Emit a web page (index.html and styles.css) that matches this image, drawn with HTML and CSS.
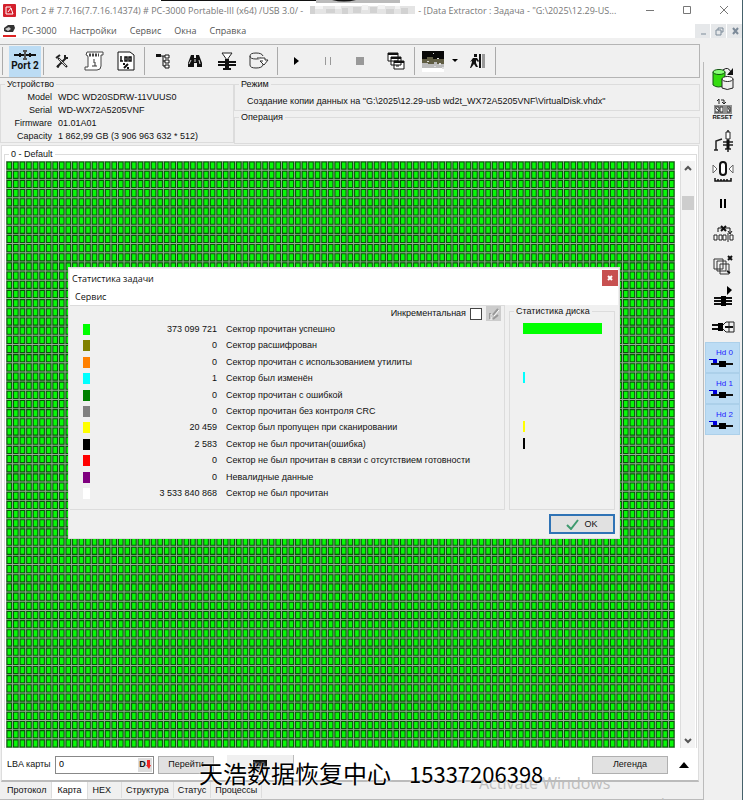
FILE: index.html
```html
<!DOCTYPE html>
<html lang="ru">
<head>
    <meta charset="UTF-8">
    <meta name="viewport" content="width=device-width, initial-scale=1.0">
    <title>PC-3000 Data Extractor</title>
    <link rel="stylesheet" href="styles.css">
</head>
<body>
    <svg class="top-strip" viewBox="0 0 240 4" width="240" height="4" aria-hidden="true">
        <path d="M0 0h156v1H0z" fill="#111"/>
        <path d="M155 0h84v3h-84z" fill="#bbb"/>
        <path d="M171 0h24q-12 3-24 0z" fill="#111"/>
    </svg>

    <header class="title-bar">
        <svg class="app-icon" viewBox="0 0 13 13" width="13" height="13">
            <rect width="13" height="13" rx="1" fill="#d4202c"/>
            <path d="M3 10V3h5M3 10h7M5 8l3-4 2 6" stroke="#fff" fill="none"/>
        </svg>
        <span>Port 2 # 7.7.16(7.7.16.14374) # PC-3000 Portable-III (x64) /USB 3.0/ -</span>
        <svg class="mosaic" viewBox="0 0 105 11" preserveAspectRatio="none" aria-hidden="true">
            <path fill="#e4e4e4" d="M0 1h105v8H0z"/>
            <path fill="#d2d2d2" d="M0 1h5v8H0zM16 4h9v4h-9zM32 3h6v6h-6zM43 2h8v6h-8zM60 2h7v6h-7zM76 4h8v5h-8zM91 3h7v6h-7z"/>
            <path fill="#f3f3f3" d="M5 1h8v3H5zM25 1h6v3h-6zM52 0h6v5h-6zM68 0h7v4h-7zM85 1h5v3h-5z"/>
        </svg>
        <span class="doc-title">- [Data Extractor : Задача - "G:\2025\12.29-US...</span>
        <div class="window-buttons">
            <button aria-label="Свернуть"><svg viewBox="0 0 10 10" width="10" height="10"><path d="M1 5.500h8"/></svg></button>
            <button aria-label="Развернуть"><svg viewBox="0 0 10 10" width="10" height="10"><path d="M1.500 1.500h7v7h-7z"/></svg></button>
            <button aria-label="Закрыть"><svg viewBox="0 0 10 10" width="10" height="10"><path d="M1 1l8 8M9 1l-8 8"/></svg></button>
        </div>
    </header>

    <nav class="menu-bar">
        <svg class="app-icon" viewBox="0 0 13 13" width="13" height="13">
            <path d="M1 4l4-3h6l1 3-2 4H3L1 7z" fill="#333"/>
            <path d="M2 5l4-2 2 2-3 2z" fill="#ccc"/>
            <path d="M0 11h13v2H0z" fill="#d22"/>
        </svg>
        <a href="#">PC-3000</a>
        <a href="#">Настройки</a>
        <a href="#">Сервис</a>
        <a href="#">Окна</a>
        <a href="#">Справка</a>
        <div class="mdi-buttons">
            <button aria-label="Свернуть окно"><svg viewBox="0 0 10 10" width="10" height="10"><path d="M3 8h5"/></svg></button>
            <button aria-label="Восстановить окно"><svg viewBox="0 0 10 10" width="10" height="10"><path d="M4 4V2h5v4H7M2 4h5v5H2z"/></svg></button>
            <button aria-label="Закрыть окно"><svg viewBox="0 0 10 10" width="10" height="10"><path d="M3 2l5 6M8 2l-5 6" stroke-width="2"/></svg></button>
        </div>
    </nav>

    <div class="workspace">
        <main class="main">
            <div class="toolbar">
                <span class="separator"></span>
                <button class="port active">
                    <svg viewBox="0 0 24 10" width="24" height="10"><path d="M1 5h22M7 3v4M17 3v4" stroke="#111" stroke-width="2"/><path d="M10 1h4M10 9h4M12 1v8" stroke="#555" stroke-width="2"/></svg>
                    Port 2
                </button>
                <span class="separator"></span>
                <button aria-label="Настройки"><svg viewBox="0 0 16 16" width="16" height="16"><path d="M4 5l9 9M12 5l-9 9" stroke="#222" stroke-width="2"/><path d="M2 5l4-3M11 2v3h3M3 13l2 1" stroke="#222" stroke-width="2" fill="none"/><path d="M5 6l7 7" stroke="#ddd"/></svg></button>
                <button aria-label="Информация"><svg viewBox="0 0 20 20" width="20" height="20"><path d="M3 1h16v3h-2v11q0 4-4 4H1v-3h3V6Q4 4 2 4z" fill="#fff" stroke="#444"/><path d="M5 4h10" stroke="#444" stroke-width="3" stroke-dasharray="2 1"/><path d="M10 8v2M9 11h2v4M8 15h5" stroke="#333" fill="none"/></svg></button>
                <button aria-label="Проценты"><svg viewBox="0 0 18 20" width="18" height="20"><path d="M1 1h12l4 3v15H1z" fill="#fff" stroke="#111"/><path d="M4 5v5M3 10h3M8 6h2v4H8zM12 6h2v4h-2z" stroke="#111" fill="none" stroke-width="1.500"/><path d="M6 13h2M7 17l4-4M10 17h2" stroke="#111" stroke-width="2"/></svg></button>
                <span class="separator"></span>
                <button aria-label="Структура"><svg viewBox="0 0 16 16" width="16" height="16"><path d="M1 1h5v3H1z" fill="#111"/><path d="M6 3h2v10h3M8 8h3M8 3h3" fill="none" stroke="#111"/><path d="M10 2h4v3h-4zM10 7h4v3h-4zM10 12h4v3h-4z" fill="#fff" stroke="#111"/></svg></button>
                <button aria-label="Поиск"><svg viewBox="0 0 16 16" width="16" height="16"><path d="M4 2h3v3h2V2h3l3 8v4h-5v-4H7v4H1v-4z" fill="#111"/><path d="M4 7l-2 4M12 7l1 4M8 6v3" stroke="#ddd"/></svg></button>
                <button aria-label="Чтение"><svg viewBox="0 0 20 18" width="20" height="18"><path d="M5 1h10l-5 7z" fill="#fff" stroke="#222"/><path d="M10 7v9" stroke="#111" stroke-width="4"/><path d="M1 10h18M1 13h18" stroke="#111" stroke-width="2"/><path d="M6 17h8" stroke="#111" stroke-width="2"/></svg></button>
                <button aria-label="Диск"><svg viewBox="0 0 20 18" width="20" height="18"><path d="M1 4v9q0 3 6 3t7-3v-3M1 4q0-3 6-3t7 3M1 4q0 3 6 3 4 0 5-1" fill="none" stroke="#333"/><path d="M8 6h8v2h3l-4 5-4-4h3" fill="#fff" stroke="#333"/></svg></button>
                <span class="separator"></span>
                <button aria-label="Старт"><svg viewBox="0 0 10 10" width="10" height="10"><path d="M3 1l5 4-5 4z"/></svg></button>
                <button aria-label="Пауза"><svg viewBox="0 0 10 10" width="10" height="10"><path d="M2 1h1v8H2zM7 1h1v8H7z" fill="#999"/></svg></button>
                <button aria-label="Стоп"><svg viewBox="0 0 10 10" width="10" height="10"><path d="M1 1h8v8H1z" fill="#999"/></svg></button>
                <span class="gap"></span>
                <button aria-label="Окна"><svg viewBox="0 0 18 18" width="18" height="18"><path d="M1 1h10v8H1zM4 5h10v8H4zM7 9h10v8H7z" fill="#fff" stroke="#111"/><path d="M1 2h10M4 6h10M7 10h10" stroke="#111" stroke-width="2"/><path d="M9 14h3" stroke="#111"/></svg></button>
                <span class="separator"></span>
                <button aria-label="Карта"><svg viewBox="0 0 22 21" width="22" height="21"><path d="M0 0h22v8H0z" fill="#080808"/><path d="M0 8h5V6h6v2h11v6H0z" fill="#605d43"/><path d="M0 12h6v1h6v-2h3v2h7v4H0z" fill="#bbb"/><path d="M0 17h22v4H0z" fill="#fff"/><path d="M11 2h1v1h-1zM15 7h2v1h-2zM5 10h2v1H5zM17 12h2v2h-2zM12 15h2v1h-2zM20 16h2v2h-2z" fill="#ddd"/></svg></button>
                <button class="arrow" aria-label="Выбор карты"><svg viewBox="0 0 7 4" width="7" height="4"><path d="M0 0h6L3 3z"/></svg></button>
                <button aria-label="Выход"><svg viewBox="0 0 16 16" width="16" height="16"><path d="M5 1h3v3H5zM4 5h4l2 3-1 1-2-2v3l2 4H7l-2-3-3 4H1l2-6V8L1 9z" fill="#111"/><path d="M10 1h2v14h-2z" fill="#111"/><path d="M13 1h3v14h-3z" fill="#999"/></svg></button>
                <span class="separator"></span>
            </div>

            <section class="info">
                <fieldset class="device">
                    <legend>Устройство</legend>
                    <dl>
                        <dt>Model</dt><dd>WDC WD20SDRW-11VUUS0</dd>
                        <dt>Serial</dt><dd>WD-WX72A5205VNF</dd>
                        <dt>Firmware</dt><dd>01.01A01</dd>
                        <dt>Capacity</dt><dd>1 862,99 GB (3 906 963 632 * 512)</dd>
                    </dl>
                </fieldset>
                <div class="state">
                    <fieldset>
                        <legend>Режим</legend>
                        <p>Создание копии данных на "G:\2025\12.29-usb wd2t_WX72A5205VNF\VirtualDisk.vhdx"</p>
                    </fieldset>
                    <fieldset>
                        <legend>Операция</legend>
                    </fieldset>
                </div>
            </section>

            <section class="map-panel">
                <fieldset class="map-group">
                    <legend>0 - Default</legend>
                    <div class="map-area">
                        <!-- 102 x 64 sectors, drawn as dashed strokes across a green field -->
                        <svg class="map" viewBox="0 0 1020 640" preserveAspectRatio="none">
                            <rect width="1020" height="640" fill="#08f808"/>
                            <path class="line-dark" d="M0 320h1020" stroke-width="640" stroke-dasharray="4.600 5.400" stroke-dashoffset="2.300"/>
                            <path class="line-dark" d="M510 0v640" stroke-width="1020" stroke-dasharray="3.400 6.600" stroke-dashoffset="1.700"/>
                            <path class="line-light" d="M0 320h1020" stroke-width="640" stroke-dasharray="1.400 8.600" stroke-dashoffset="0.700"/>
                            <path class="line-light" d="M510 0v640" stroke-width="1020" stroke-dasharray="1 9" stroke-dashoffset="0.500"/>
                        </svg>
                        <div class="scrollbar">
                            <button aria-label="Вверх"><svg viewBox="0 0 8 6" width="8" height="6"><path d="M1 5l3-3 3 3"/></svg></button>
                            <span class="thumb"></span>
                            <button aria-label="Вниз"><svg viewBox="0 0 8 6" width="8" height="6"><path d="M1 1l3 3 3-3"/></svg></button>
                        </div>
                    </div>
                </fieldset>
                <div class="map-controls">
                    <label for="lba">LBA карты</label>
                    <div class="lba-box">
                        <input id="lba" type="text" value="0">
                        <button aria-label="Формат"><b>D</b><svg viewBox="0 0 5 9" width="5" height="9"><path d="M1 0h3v5h1L3 9 0 5h1z" fill="#e22"/></svg></button>
                    </div>
                    <button class="push go">Перейти</button>
                    <div class="mini"><svg viewBox="0 0 14 10" width="14" height="10"><path d="M0 0h14v6H0z" fill="#111"/><path d="M0 6h14v4H0z" fill="#777"/></svg></div>
                    <button class="push legend-btn">Легенда</button>
                    <button class="expand" aria-label="Развернуть"><svg viewBox="0 0 10 6" width="10" height="6"><path d="M5 0l5 6H0z"/></svg></button>
                </div>
            </section>

            <div class="tabs">
                <button>Протокол</button>
                <button class="current">Карта</button>
                <button class="hex">HEX</button>
                <button>Структура</button>
                <button>Статус</button>
                <button>Процессы</button>
            </div>
        </main>

        <aside class="side-bar">
            <button aria-label="Копия диска"><svg viewBox="0 0 24 24" width="24" height="24"><path d="M2 5v13q5 4 12 0V5" fill="#35dd10" stroke="#151"/><ellipse cx="8" cy="5" rx="6" ry="2.500" fill="#8f7" stroke="#151"/><path d="M11 12v9q5 3 11 0v-9" fill="#eee" stroke="#222"/><ellipse cx="16.500" cy="12" rx="5.500" ry="2.500" fill="#fff" stroke="#222"/><path d="M12 3q5-4 8 2" fill="none" stroke="#111"/><path d="M22 1v7h-6z" fill="#111"/></svg></button>
            <button aria-label="Reset" class="reset"><svg viewBox="0 0 20 16" width="20" height="16"><path d="M4 3l2-2v5M8 2h3v4M9 4l2 2 2-2" fill="none" stroke="#222"/><path d="M1 8h18M1 15h18" stroke="#333"/><path d="M2 9v5h4V9zM7 9v5h3V9zM14 9v5h3V9zM12 9v5M18 9v5M3 10l3 3M15 10l2 3" stroke="#333" fill="none"/></svg><span>RESET</span></button>
            <button aria-label="Питание"><svg viewBox="0 0 22 22" width="22" height="22"><path d="M2 20h4M4 20v-9l6-2M11 12h10M11 15h10M16 0v22M13 19h6" fill="none" stroke="#222" stroke-width="1.500"/><path d="M14 2h4v7h-4z" fill="#fff" stroke="#222"/><path d="M16 10v9" stroke="#111" stroke-width="3"/></svg></button>
            <button aria-label="Рекалибровка"><svg viewBox="0 0 22 22" width="22" height="22"><rect x="8" y="1" width="6" height="13" rx="3" fill="#fff" stroke="#111" stroke-width="2"/><path d="M1 4l4 4-4 4zM21 4l-4 4 4 4z" fill="#fff" stroke="#666"/><path d="M3 17v3h16v-3M6 18v2M9 18v2M12 18v2M15 18v2" fill="none" stroke="#111" stroke-width="1.500"/></svg></button>
            <button aria-label="Пауза"><svg viewBox="0 0 10 10" width="10" height="10"><path d="M2 1h2v9H2zM6 1h2v9H6z"/></svg></button>
            <button aria-label="Пропуск"><svg viewBox="0 0 22 18" width="22" height="18"><path d="M6 7V3h12v5M16 6l2 3 2-3" fill="none" stroke="#111"/><path d="M9 1l5 5M14 1l-5 5" stroke="#111" stroke-width="2"/><path d="M2 10h3v5H2zM7 10h3v5H7zM11 10h3v5h-3zM16 8v9M18 10h3v5h-3z" fill="#fff" stroke="#222"/></svg></button>
            <button aria-label="Копировать"><svg viewBox="0 0 22 20" width="22" height="20"><path d="M2 4h9v10H2zM5 6h9v10H5zM8 9h9v10H8z" fill="#f0f0f0" stroke="#333"/><path d="M16 1l4 4M20 1l-4 4M15 16l3 2" stroke="#111" stroke-width="2"/></svg></button>
            <button aria-label="Запуск головок"><svg viewBox="0 0 20 22" width="20" height="22"><path d="M14 1l5 4-5 5z"/><path d="M1 13h18M1 16h18M1 19h18" stroke="#111" stroke-width="2"/><path d="M8 11h5v10H8z"/></svg></button>
            <button aria-label="Головки"><svg viewBox="0 0 24 14" width="24" height="14"><path d="M1 5h11M1 9h11M14 7h8" stroke="#111" stroke-width="2"/><path d="M7 3h5v8H7z"/><path d="M12 5l3-3h8v10h-8l-3-3M18 2v10" fill="none" stroke="#222"/></svg></button>
            <button class="head active">Hd 0<svg viewBox="0 0 24 10" width="24" height="10"><path d="M2 6h22" stroke="#111" stroke-width="2"/><path d="M10 3h7v6h-7z"/><path d="M0 1h8v4H4V2H0z" fill="#00d"/></svg></button>
            <button class="head active">Hd 1<svg viewBox="0 0 24 10" width="24" height="10"><path d="M2 6h22" stroke="#111" stroke-width="2"/><path d="M10 3h7v6h-7z"/><path d="M0 1h8v4H4V2H0z" fill="#00d"/></svg></button>
            <button class="head active">Hd 2<svg viewBox="0 0 24 10" width="24" height="10"><path d="M2 6h22" stroke="#111" stroke-width="2"/><path d="M10 3h7v6h-7z"/><path d="M0 1h8v4H4V2H0z" fill="#00d"/></svg></button>
        </aside>
    </div>

    <section class="dialog" role="dialog" aria-labelledby="dialog-title">
        <header class="dialog-title">
            <span id="dialog-title">Статистика задачи</span>
            <button aria-label="Закрыть"><svg viewBox="0 0 6 6" width="6" height="6"><path d="M1 1l4 4M5 1l-4 4"/></svg></button>
        </header>
        <nav class="dialog-menu"><a href="#">Сервис</a></nav>
        <div class="dialog-body">
            <div class="stats">
                <div class="incremental">
                    <label for="inc">Инкрементальная</label>
                    <input id="inc" type="checkbox">
                    <button aria-label="Очистить"><svg viewBox="0 0 14 14" width="14" height="14"><path d="M3 6v6M6 8l5-6M6 12l5-4M2 9h3" stroke="#999" stroke-width="2"/><path d="M4 7v6M7 9l5-6" stroke="#fff"/></svg></button>
                </div>
                <table>
                    <tr><td><i class="swatch read"></i></td><td>373 099 721</td><td>Сектор прочитан успешно</td></tr>
                    <tr><td><i class="swatch decoded"></i></td><td>0</td><td>Сектор расшифрован</td></tr>
                    <tr><td><i class="swatch utility"></i></td><td>0</td><td>Сектор прочитан с использованием утилиты</td></tr>
                    <tr><td><i class="swatch changed"></i></td><td>1</td><td>Сектор был изменён</td></tr>
                    <tr><td><i class="swatch with-error"></i></td><td>0</td><td>Сектор прочитан с ошибкой</td></tr>
                    <tr><td><i class="swatch no-crc"></i></td><td>0</td><td>Сектор прочитан без контроля CRC</td></tr>
                    <tr><td><i class="swatch skipped"></i></td><td>20 459</td><td>Сектор был пропущен при сканировании</td></tr>
                    <tr><td><i class="swatch failed"></i></td><td>2 583</td><td>Сектор не был прочитан(ошибка)</td></tr>
                    <tr><td><i class="swatch not-ready"></i></td><td>0</td><td>Сектор не был прочитан в связи с отсутствием готовности</td></tr>
                    <tr><td><i class="swatch invalid"></i></td><td>0</td><td>Невалидные данные</td></tr>
                    <tr><td><i class="swatch unread"></i></td><td>3 533 840 868</td><td>Сектор не был прочитан</td></tr>
                </table>
            </div>
            <fieldset class="disk-stats">
                <legend>Статистика диска</legend>
                <div class="bars">
                    <span class="bar read" style="width: 100%"></span>
                    <span></span>
                    <span></span>
                    <span class="bar changed" style="width: 2%"></span>
                    <span></span>
                    <span></span>
                    <span class="bar skipped" style="width: 2%"></span>
                    <span class="bar failed" style="width: 2%"></span>
                    <span></span>
                    <span></span>
                    <span></span>
                </div>
            </fieldset>
        </div>
        <footer class="dialog-footer">
            <button class="ok"><svg viewBox="0 0 13 11" width="13" height="11"><path d="M1 6l4 4 7-9"/></svg>OK</button>
        </footer>
    </section>

    <div class="activation">
        <strong>Activate Windows</strong>
        <span>Go to Settings to activate Windows.</span>
    </div>
    <div class="watermark"><span>天浩数据恢复中心</span> <span class="phone">15337206398</span></div>
</body>
</html>
```

FILE: styles.css
```css
* {
    box-sizing: border-box;
}

body {
    position: relative;
    display: flex;
    flex-direction: column;
    height: 100vh;
    margin: 0;
    overflow: hidden;
    border-right: 1px solid #45616b;
    background: #fff;
    color: #111;
    font-family: "Liberation Sans", Arial, sans-serif;
    font-size: 9px;
    line-height: 13px;
}

button {
    display: flex;
    align-items: center;
    justify-content: center;
    margin: 0;
    padding: 0;
    border: none;
    background: none;
    color: inherit;
    font: inherit;
}

a {
    color: inherit;
    text-decoration: none;
}

svg {
    display: block;
    flex: none;
}

fieldset {
    min-width: 0;
    margin: 0;
    padding: 0;
    border: 1px solid #dcdcdc;
}

legend {
    margin-left: 4px;
    padding: 0 2px;
}

/* Title and menu */
.top-strip {
    position: absolute;
    top: 0;
    left: 161px;
}

.title-bar,
.menu-bar {
    display: flex;
    align-items: center;
    height: 20px;
    padding-left: 3px;
    color: #777;
    font-family: "Open Sans", "Noto Sans", sans-serif;
    white-space: nowrap;
}

.title-bar .app-icon {
    margin-right: 5px;
}

.mosaic {
    flex: 0 1 105px;
    width: 105px;
    height: 11px;
    margin: 0 3px 0 7px;
}

.window-buttons,
.mdi-buttons {
    display: flex;
    margin-left: auto;
}

.window-buttons button {
    width: 37px;
    height: 20px;
}

.window-buttons path {
    fill: none;
    stroke: #777;
}

.menu-bar {
    gap: 13px;
    height: 18px;
    color: #555;
    padding-top: 3px;
}

.menu-bar .app-icon {
    margin-right: -7px;
}

.mdi-buttons {
    gap: 1px;
}

.mdi-buttons button {
    width: 15px;
    height: 14px;
    background: #e6e8ea;
}

.mdi-buttons path {
    fill: none;
    stroke: #7d8b99;
}

.workspace {
    display: flex;
    flex: 1;
    min-height: 0;
    background: #f0f0f0;
}

.main {
    display: flex;
    flex: 1;
    flex-direction: column;
    min-width: 0;
    padding-top: 6px;
}

/* Toolbar */
.toolbar {
    display: flex;
    align-items: center;
    height: 34px;
    margin-right: 3px;
    border: 1px solid #b4b4b4;
    border-left: none;
}

.toolbar button {
    width: 32px;
    height: 31px;
}

.toolbar .separator {
    width: 1px;
    height: 28px;
    margin: 0 2px;
    background: #aaa;
}

.toolbar .separator:first-child {
    margin-right: 6px;
}

.toolbar .gap {
    width: 4px;
}

.toolbar .arrow {
    width: 12px;
}

.toolbar .port {
    flex-direction: column;
    color: #111;
    font-family: Roboto, sans-serif;
    font-size: 10px;
    font-weight: bold;
    line-height: 12px;
    white-space: nowrap;
}

.active {
    background: #bcdcf4;
}

/* Device info */
.info {
    display: flex;
    margin-right: 3px;
}

.device {
    width: 234px;
    height: 65px;
}

dl {
    display: grid;
    grid-template-columns: 51px 1fr;
    column-gap: 6px;
    margin: 0;
}

dt {
    text-align: right;
}

dd {
    margin: 0;
    white-space: nowrap;
}

.state {
    display: flex;
    flex: 1;
    flex-direction: column;
    min-width: 0;
}

.state fieldset {
    height: 33px;
}

.state p {
    margin: 4px 0 0 12px;
    white-space: nowrap;
}

/* Sector map */
.map-panel {
    display: flex;
    flex: 1;
    flex-direction: column;
    min-height: 0;
    margin: 1px 4px 0 1px;
    padding: 2px 1px 0 2px;
    border: 1px solid #ddd;
    border-width: 1px 1px 2px;
    border-bottom-color: #bbb;
    background: #fff;
}

.map-group {
    display: flex;
    flex: 1;
    flex-direction: column;
    min-height: 0;
    border-bottom: none;
}

.map-area {
    display: flex;
    height: 100%;
    padding-left: 1px;
}

.map {
    flex: 1;
    width: 0;
    height: 100%;
}

.line-dark {
    stroke: #075707;
}

.line-light {
    stroke: #98ac98;
}

.scrollbar {
    display: flex;
    flex-direction: column;
    width: 15px;
    margin: 0 1px 0 5px;
    border-left: 1px solid #ddd;
    background: #f3f3f3;
}

.scrollbar button {
    width: 100%;
    height: 14px;
}

.scrollbar path {
    fill: none;
    stroke: #555;
    stroke-width: 2;
}

.scrollbar .thumb {
    height: 14px;
    margin: 21px 1px auto;
    background: #cdcdcd;
}

.map-controls {
    display: flex;
    align-items: center;
    height: 32px;
    padding: 1px 7px 0 3px;
}

.map-controls label {
    width: 48px;
    white-space: nowrap;
}

.lba-box {
    display: flex;
    width: 99px;
    height: 18px;
    padding: 1px;
    border: 1px solid #888;
    background: #fff;
}

.lba-box input {
    flex: 1;
    min-width: 0;
    padding: 0 2px;
    border: none;
    font: inherit;
}

.lba-box button {
    width: 14px;
    background: #ddd;
}

.push {
    height: 18px;
    border: 1px solid #b0b0b0;
    background: #e1e1e1;
}

.go {
    width: 56px;
    margin-left: 4px;
}

.mini {
    display: flex;
    align-items: center;
    justify-content: center;
    width: 67px;
    height: 20px;
    margin-left: 13px;
    border-right: 1px solid #bbb;
    background: #f0f0f0;
}

.legend-btn {
    width: 76px;
    margin-left: auto;
}

.expand {
    width: 12px;
    height: 18px;
    margin-left: 10px;
}

.tabs {
    display: flex;
    align-items: flex-start;
    height: 18px;
    padding-left: 2px;
    border-bottom: 1px solid #bbb;
}

.tabs button {
    height: 16px;
    padding: 0 5px;
    border-right: 1px solid #ddd;
}

.tabs .current {
    height: 17px;
    background: #fff;
}

.tabs .hex {
    padding-right: 10px;
}

.tabs .hex ~ button {
    padding: 0 4px;
}

/* Right bar */
.side-bar {
    width: 39px;
    margin-top: 24px;
    padding: 1px 2px 0 1px;
    border-left: 1px solid #bbb;
}

.side-bar button {
    width: 100%;
    height: 31px;
}

.side-bar .reset,
.side-bar .head {
    flex-direction: column;
}

.reset span {
    font-size: 6px;
    font-weight: bold;
    line-height: 7px;
}

.side-bar .head {
    align-items: flex-end;
    padding-right: 6px;
    border: 1px solid #acd0ea;
    color: #22f;
    font-size: 8px;
    line-height: 10px;
}

/* Statistics window */
.dialog {
    position: absolute;
    top: 267px;
    left: 68px;
    width: 552px;
    padding: 1px;
    border: 1px solid #ddd;
    background: #f0f0f0;
}

.dialog-title,
.dialog-menu {
    display: flex;
    align-items: center;
    height: 18px;
    padding-left: 2px;
    background: #fff;
    font-family: "Open Sans", "Noto Sans", sans-serif;
}

.dialog-title button {
    width: 16px;
    height: 16px;
    margin-left: auto;
    background: #c75050;
}

.dialog-title path {
    stroke: #fff;
    stroke-width: 2;
}

.dialog-menu {
    padding-left: 5px;
}

.dialog-body {
    display: flex;
    gap: 4px;
    padding-right: 3px;
}

.stats {
    flex: 1;
    border: 1px solid #dcdcdc;
    border-left: none;
}

.incremental {
    display: flex;
    align-items: center;
    justify-content: flex-end;
    gap: 4px;
    height: 15px;
    padding-right: 3px;
}

.incremental input {
    appearance: none;
    width: 12px;
    height: 12px;
    margin: 0;
    border: 1px solid #444;
    background: #fff;
}

.incremental button {
    width: 15px;
    height: 15px;
    background: #ccc;
}

.stats table {
    width: 100%;
    height: 181px;
    border-collapse: collapse;
    table-layout: fixed;
}

.stats td {
    padding: 0;
    white-space: nowrap;
}

.stats td:first-child {
    width: 34px;
    padding-left: 13px;
}

.stats td:nth-child(2) {
    width: 113px;
    text-align: right;
}

.stats td:nth-child(3) {
    padding-left: 9px;
}

.swatch {
    display: block;
    width: 7px;
    height: 11px;
}

.disk-stats {
    width: 106px;
    height: 205px;
}

.bars {
    display: grid;
    grid-auto-rows: 1fr;
    align-items: center;
    height: 181px;
    margin: 2px 12px 0 13px;
}

.bar {
    min-width: 2px;
    height: 11px;
}

.read { background: #00ff00; }
.decoded { background: #808000; }
.utility { background: #ff8000; }
.changed { background: #00ffff; }
.with-error { background: #008000; }
.no-crc { background: #808080; }
.skipped { background: #ffff00; }
.failed { background: #000; }
.not-ready { background: #ff0000; }
.invalid { background: #800080; }
.unread { background: #fff; }

.dialog-footer {
    display: flex;
    justify-content: flex-end;
    padding: 4px 3px 3px;
}

.ok {
    gap: 5px;
    width: 66px;
    height: 20px;
    border: 2px solid #2f73b5;
    background: #e1e1e1;
}

.ok path {
    fill: none;
    stroke: #3f9a6f;
    stroke-width: 2;
}

/* Overlays */
.activation {
    position: absolute;
    top: 773px;
    left: 479px;
    display: flex;
    flex-direction: column;
    color: #bdbdbd;
    font-family: "Open Sans", sans-serif;
    font-size: 13px;
    line-height: 20px;
    white-space: nowrap;
}

.activation strong {
    font-size: 16px;
    font-weight: normal;
}

.watermark {
    position: absolute;
    top: 759px;
    left: 199px;
    display: flex;
    align-items: baseline;
    gap: 18px;
    color: #000;
    font-family: "Noto Sans CJK SC", sans-serif;
    font-size: 24px;
    line-height: 28px;
    text-shadow: 0 0 2px #fff, 0 0 2px #fff;
    white-space: nowrap;
}

.phone {
    font-size: 22px;
}
```
